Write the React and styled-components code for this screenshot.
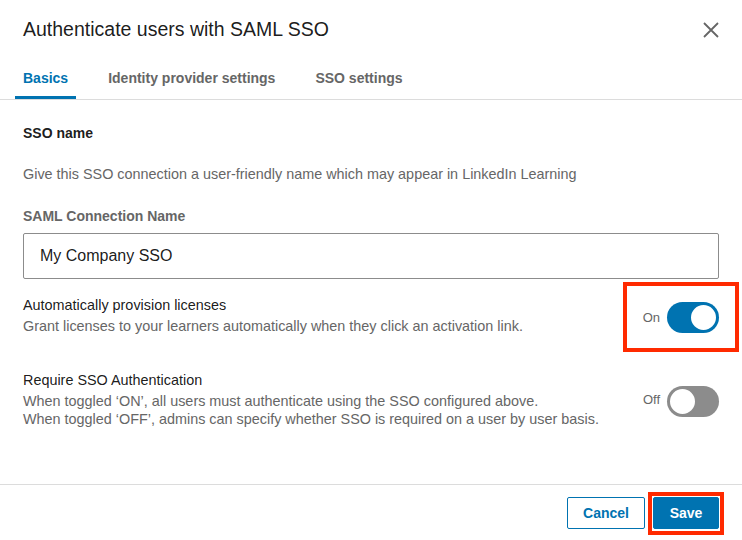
import React from 'react';
import styled, { createGlobalStyle, css } from 'styled-components';

const LI_BLUE = '#0073b1';
const MARK = '#ff2a00';

const GlobalStyle = createGlobalStyle`
  html, body {
    margin: 0;
    padding: 0;
    background: #fff;
  }
  body {
    font-family: "Liberation Sans", Arial, sans-serif;
    -webkit-font-smoothing: antialiased;
  }
`;

// red annotation frame drawn over a control
const marked = (inset) => css`
  position: relative;
  &::after {
    content: '';
    position: absolute;
    inset: ${inset};
    border: 4px solid ${MARK};
    pointer-events: none;
  }
`;

const Modal = styled.div`
  width: 742px;
  height: 540px;
  display: flex;
  flex-direction: column;
  background: #fff;
  overflow: hidden;
`;

const Header = styled.div`
  height: 58px;
  display: flex;
  align-items: center;
  justify-content: space-between;
  padding: 0 23px;
  box-sizing: border-box;
`;

const Title = styled.h2`
  margin: 0;
  font-size: 19.5px;
  font-weight: 400;
  color: rgba(0, 0, 0, 0.9);
`;

const CloseButton = styled.button`
  width: 16px;
  height: 16px;
  padding: 0;
  margin-top: 2px;
  border: 0;
  background: none;
  display: flex;
  cursor: pointer;
`;

const Tabs = styled.div`
  height: 42px;
  display: flex;
  gap: 24px;
  padding-left: 15px;
  border-bottom: 1px solid #dcdcdc;
  box-sizing: border-box;
`;

const Tab = styled.div`
  padding: 0 8px 1px;
  display: flex;
  align-items: center;
  font-size: 14px;
  font-weight: 700;
  color: ${(p) => (p.active ? LI_BLUE : '#666')};
  box-shadow: ${(p) => (p.active ? `inset 0 -3px 0 ${LI_BLUE}` : 'none')};
`;

const Body = styled.div`
  flex: 1;
  padding: 23px 23px 0;
`;

const SectionTitle = styled.div`
  font-size: 14px;
  line-height: 20px;
  font-weight: 700;
  color: rgba(0, 0, 0, 0.9);
`;

const Hint = styled.div`
  margin-top: 21px;
  font-size: 14.4px;
  line-height: 20px;
  color: #666;
`;

const FieldLabel = styled.label`
  display: block;
  margin-top: 22px;
  font-size: 14px;
  line-height: 20px;
  font-weight: 700;
  color: #666;
`;

const TextInput = styled.input`
  display: block;
  width: 100%;
  height: 46px;
  margin-top: 7px;
  box-sizing: border-box;
  padding: 0 16px;
  border: 1px solid #8c8c8c;
  border-radius: 2px;
  font-family: inherit;
  font-size: 16px;
  color: rgba(0, 0, 0, 0.9);
  outline: none;
`;

const SettingRow = styled.div`
  display: flex;
  align-items: center;
  justify-content: space-between;
  margin-top: ${(p) => p.gap}px;
`;

const SettingText = styled.div`
  display: flex;
  flex-direction: column;
`;

const SettingTitle = styled.div`
  font-size: 14.4px;
  line-height: 20px;
  color: rgba(0, 0, 0, 0.9);
`;

const SettingDesc = styled.div`
  margin-top: 2px;
  font-size: 14.4px;
  line-height: 18px;
  color: #666;
`;

const ToggleGroup = styled.div`
  display: flex;
  align-items: center;
  gap: 7px;
  margin-top: 4px;
  ${(p) => p.marked && marked('-20px -20px -19px -20px')}
`;

const ToggleLabel = styled.span`
  font-size: 13px;
  color: #666;
  margin-top: ${(p) => (p.on ? '0' : '-4px')};
`;

const Track = styled.div`
  width: 52px;
  height: 31px;
  border-radius: 16px;
  background: ${(p) => (p.on ? LI_BLUE : '#8c8c8c')};
  display: flex;
  align-items: center;
  justify-content: ${(p) => (p.on ? 'flex-end' : 'flex-start')};
  padding: 0 1px;
  box-sizing: border-box;
`;

const Knob = styled.div`
  width: 29px;
  height: 29px;
  border-radius: 50%;
  background: #fff;
  box-sizing: border-box;
  border: 2px solid ${(p) => (p.on ? LI_BLUE : '#8c8c8c')};
`;

const Footer = styled.div`
  height: 56px;
  border-top: 1px solid #dcdcdc;
  display: flex;
  justify-content: flex-end;
  align-items: flex-start;
  gap: 8px;
  padding: 12px 23px 0;
  box-sizing: border-box;
`;

const Button = styled.button`
  height: 32px;
  min-width: ${(p) => (p.primary ? 66 : 78)}px;
  padding: 0 15px;
  border-radius: 2px;
  font-family: inherit;
  font-size: 14px;
  font-weight: 700;
  cursor: pointer;
  border: 1px solid ${LI_BLUE};
  color: ${(p) => (p.primary ? '#fff' : LI_BLUE)};
  background: ${(p) => (p.primary ? LI_BLUE : '#fff')};
  ${(p) => p.marked && marked('-6px -6px -7px -6px')}
`;

const Toggle = ({ on, marked }) => (
  <ToggleGroup marked={marked}>
    <ToggleLabel on={on}>{on ? 'On' : 'Off'}</ToggleLabel>
    <Track on={on}>
      <Knob on={on} />
    </Track>
  </ToggleGroup>
);

export default function App() {
  return (
    <>
      <GlobalStyle />
      <Modal>
        <Header>
          <Title>Authenticate users with SAML SSO</Title>
          <CloseButton aria-label="Close">
            <svg width="16" height="16" viewBox="0 0 16 16">
              <path d="M1 1 L15 15 M15 1 L1 15" stroke="#666" strokeWidth="1.8" fill="none" />
            </svg>
          </CloseButton>
        </Header>
        <Tabs>
          <Tab active>Basics</Tab>
          <Tab>Identity provider settings</Tab>
          <Tab>SSO settings</Tab>
        </Tabs>
        <Body>
          <SectionTitle>SSO name</SectionTitle>
          <Hint>Give this SSO connection a user-friendly name which may appear in LinkedIn Learning</Hint>
          <FieldLabel>SAML Connection Name</FieldLabel>
          <TextInput defaultValue="My Company SSO" />

          <SettingRow gap={16}>
            <SettingText>
              <SettingTitle>Automatically provision licenses</SettingTitle>
              <SettingDesc>Grant licenses to your learners automatically when they click an activation link.</SettingDesc>
            </SettingText>
            <Toggle on marked />
          </SettingRow>

          <SettingRow gap={35}>
            <SettingText>
              <SettingTitle>Require SSO Authentication</SettingTitle>
              <SettingDesc>
                When toggled ‘ON’, all users must authenticate using the SSO configured above.
                <br />
                When toggled ‘OFF’, admins can specify whether SSO is required on a user by user basis.
              </SettingDesc>
            </SettingText>
            <Toggle on={false} />
          </SettingRow>
        </Body>
        <Footer>
          <Button>Cancel</Button>
          <Button primary marked>Save</Button>
        </Footer>
      </Modal>
    </>
  );
}
